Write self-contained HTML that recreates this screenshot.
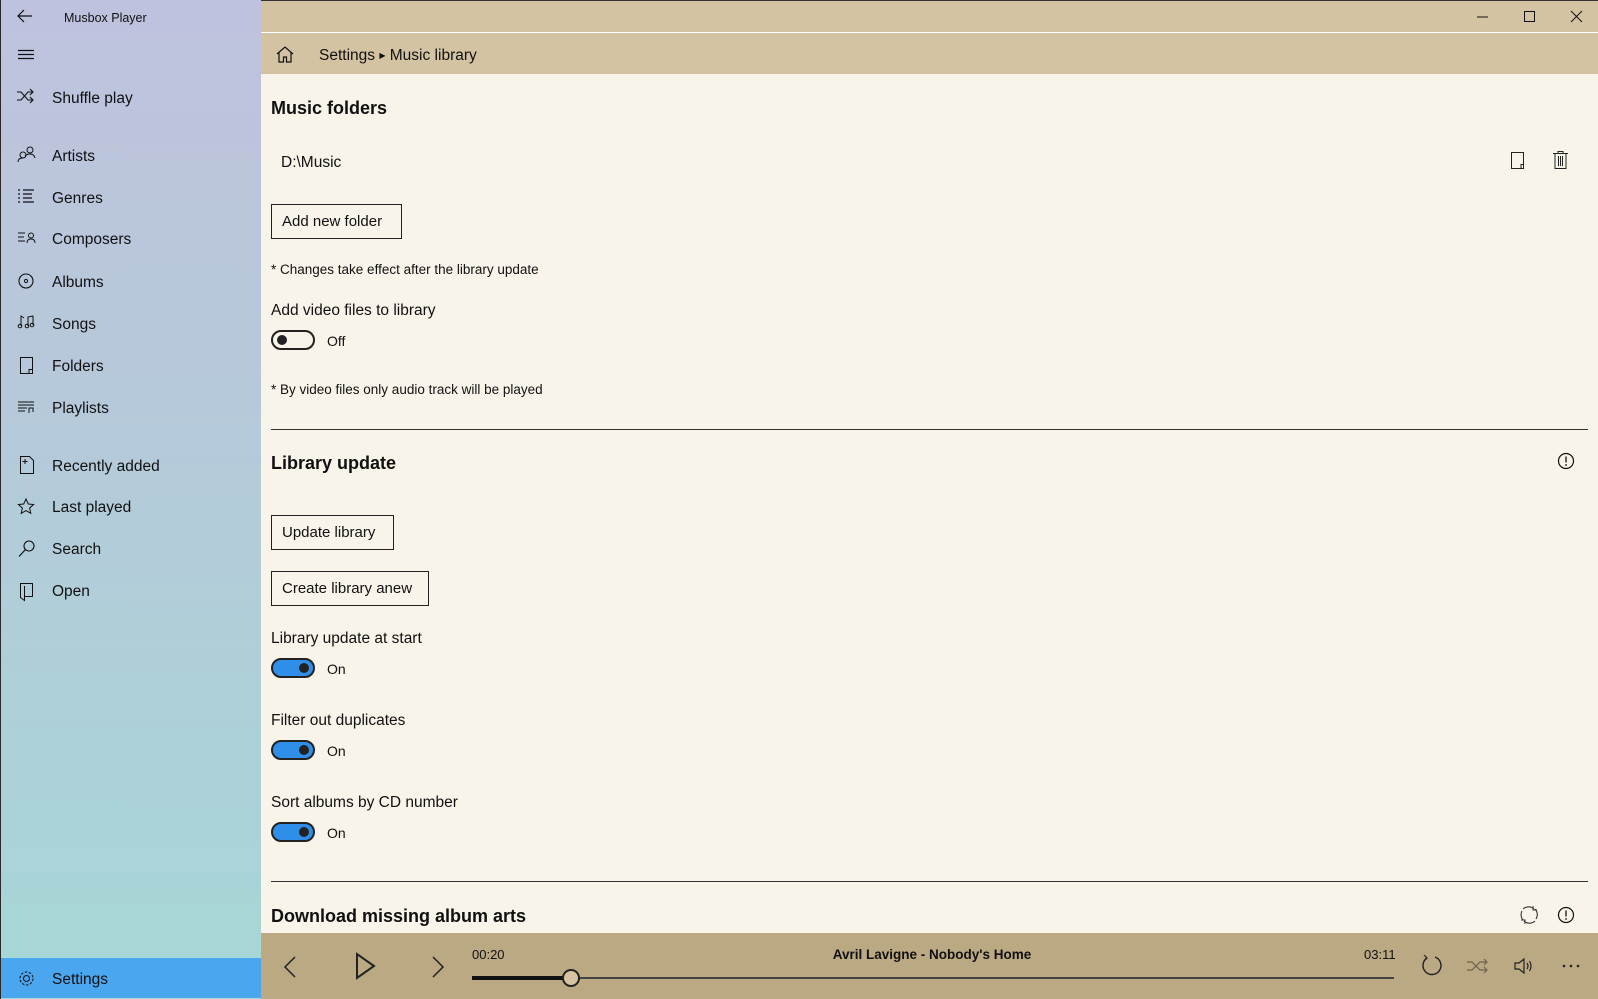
<!DOCTYPE html>
<html><head><meta charset="utf-8"><style>
*{margin:0;padding:0;box-sizing:border-box}
body{width:1598px;height:999px;overflow:hidden;position:relative;font-family:"Segoe UI","Liberation Sans",sans-serif;color:#111;background:#f8f4e9}
.a{position:absolute;white-space:nowrap}
.side{position:absolute;left:0;top:0;width:261px;height:999px;background:linear-gradient(180deg,#bfc2de 0%,#b6c9da 40%,#a6d7d6 100%);border-left:1px solid #2a2a2a}
.nav{position:absolute;left:51px;font-size:15.5px;line-height:20px}
svg{position:absolute;overflow:visible}
.t{font-size:15px;line-height:20px}
.h{font-size:18px;font-weight:bold;line-height:24px}
.btn{position:absolute;border:1px solid #222;font-size:15px;line-height:34px;padding:0 10px;height:35px}
.tg{position:absolute;left:271px;width:44px;height:20px;border-radius:10px;border:2px solid #222}
.tg i{position:absolute;top:3px;width:10px;height:10px;border-radius:50%;background:#222}
.on{background:#2f8fe8}
.on i{right:4px}
.off i{left:4px}
</style></head><body>
<div class="side">
<svg style="left:16px;top:9px" width="16" height="14" viewBox="0 0 16 14"><path d="M15 7H2M7 1L1 7l6 6" fill="none" stroke="#111" stroke-width="1.2"/></svg>
<div class="a" style="left:63px;top:9px;font-size:12.5px;line-height:18px">Musbox Player</div>
<svg style="left:17px;top:49px" width="17" height="12"><path d="M0 1.5h16M0 5.5h16M0 9.5h16" stroke="#111" stroke-width="1.2"/></svg>
<svg style="left:16px;top:89px" width="18" height="14"><path d="M0 3h4l7 8h5M0 11h4l7-8h5M13 0l3 3-3 3M13 8l3 3-3 3" fill="none" stroke="#111" stroke-width="1.1"/></svg>
<div class="nav" style="top:89px">Shuffle play</div>
<svg style="left:17px;top:146px" width="18" height="16"><circle cx="5" cy="9" r="3" fill="none" stroke="#111"/><path d="M0 16q0-4 5-4" fill="none" stroke="#111"/><circle cx="12" cy="4" r="3" fill="none" stroke="#111"/><path d="M7 10q2-2 5-2 4 0 5 4" fill="none" stroke="#111"/></svg>
<div class="nav" style="top:147px">Artists</div>
<svg style="left:17px;top:189px" width="18" height="16"><path d="M0 1h2M0 5h2M0 9h2M0 13h2M5 1h11M5 5h9M5 9h9M5 13h11" stroke="#111" stroke-width="1.2"/></svg>
<div class="nav" style="top:189px">Genres</div>
<svg style="left:17px;top:232px" width="20" height="12"><path d="M0 1h7M0 5h6M0 9h7" stroke="#111" stroke-width="1.1"/><circle cx="13" cy="3.5" r="2.5" fill="none" stroke="#111"/><path d="M9 11q0-4 4-4t4 4" fill="none" stroke="#111"/></svg>
<div class="nav" style="top:230px">Composers</div>
<svg style="left:17px;top:273px" width="16" height="16"><circle cx="8" cy="8" r="7" fill="none" stroke="#111" stroke-width="1.1"/><circle cx="8" cy="8" r="1.6" fill="none" stroke="#111"/></svg>
<div class="nav" style="top:273px">Albums</div>
<svg style="left:17px;top:315px" width="16" height="14"><path d="M3 11V1l3 2M10 11V2l5-1v9" fill="none" stroke="#111"/><circle cx="2" cy="11" r="1.8" fill="none" stroke="#111"/><circle cx="9" cy="11" r="1.8" fill="none" stroke="#111"/><circle cx="14" cy="10" r="1.8" fill="none" stroke="#111"/></svg>
<div class="nav" style="top:315px">Songs</div>
<svg style="left:19px;top:357px" width="14" height="17"><path d="M.5.5h12v16H.5z M9 16.5v-4h3.5" fill="none" stroke="#111"/></svg>
<div class="nav" style="top:357px">Folders</div>
<svg style="left:17px;top:401px" width="17" height="13"><path d="M0 1h16M0 4h16M0 7h9M0 10h7" stroke="#111"/><path d="M11 12V7h4v4" fill="none" stroke="#111"/></svg>
<div class="nav" style="top:399px">Playlists</div>
<svg style="left:19px;top:456px" width="14" height="18"><path d="M.5.5h9l4 4v13H.5z" fill="none" stroke="#111"/><path d="M5 3v5M2.5 5.5h5" stroke="#111"/></svg>
<div class="nav" style="top:457px">Recently added</div>
<svg style="left:16px;top:498px" width="18" height="17"><path d="M9 1l2.3 5 5.3.5-4 3.6 1.2 5.3L9 12.6l-4.8 2.8 1.2-5.3-4-3.6 5.3-.5z" fill="none" stroke="#111"/></svg>
<div class="nav" style="top:498px">Last played</div>
<svg style="left:17px;top:540px" width="18" height="18"><circle cx="11" cy="6" r="5" fill="none" stroke="#111" stroke-width="1.1"/><path d="M7.5 9.5L1 16.5" stroke="#111" stroke-width="1.2"/></svg>
<div class="nav" style="top:540px">Search</div>
<svg style="left:19px;top:583px" width="14" height="18"><path d="M.5.5h12v13H4.5v4l-4-3z M4.5 13.5V3" fill="none" stroke="#111"/></svg>
<div class="nav" style="top:582px">Open</div>
<div class="a" style="left:0;top:958px;width:261px;height:40px;background:#4aa6ee"></div>
<svg style="left:17px;top:970px" width="17" height="17"><circle cx="8.5" cy="8.5" r="3" fill="none" stroke="#111"/><circle cx="8.5" cy="8.5" r="6.5" fill="none" stroke="#111" stroke-dasharray="2.5 1.6"/></svg>
<div class="nav" style="top:970px">Settings</div>
</div>
<div class="a" style="left:261px;top:0;width:1337px;height:32px;background:#d3c3a2;border-top:1px solid #333"></div>
<div class="a" style="left:261px;top:32px;width:1337px;height:1px;background:#fff"></div>
<div class="a" style="left:261px;top:33px;width:1337px;height:41px;background:#d3c3a2"></div>
<svg style="left:1477px;top:16px" width="12" height="2"><path d="M0 1h11" stroke="#111"/></svg>
<svg style="left:1524px;top:11px" width="12" height="12"><rect x=".5" y=".5" width="10" height="10" fill="none" stroke="#111"/></svg>
<svg style="left:1571px;top:11px" width="12" height="12"><path d="M0 0l11 11M11 0L0 11" stroke="#111"/></svg>
<svg style="left:276px;top:46px" width="18" height="17"><path d="M1 8L9 1l8 7M3 6.5V16h4.5v-5h3v5H15V6.5" fill="none" stroke="#111" stroke-width="1.2"/></svg>
<div class="a" style="left:319px;top:45px;font-size:15.5px;line-height:22px">Settings <span style="font-size:8px;vertical-align:2px">▶</span> Music library</div>

<div class="a h" style="left:271px;top:96px">Music folders</div>
<div class="a" style="left:281px;top:153px;font-size:15.5px;line-height:20px">D:\Music</div>
<svg style="left:1511px;top:152px" width="15" height="18"><path d="M.5.5h12v16H.5z M10 16.5v-4h3" fill="none" stroke="#222"/></svg>
<svg style="left:1553px;top:151px" width="15" height="18"><path d="M0 2.5h15M5 2.5V.5h5v2M2 2.5v15h11v-15M5.5 5v10M7.5 5v10M9.5 5v10" fill="none" stroke="#222"/></svg>
<div class="btn" style="left:271px;top:204px;width:131px">Add new folder</div>
<div class="a" style="left:271px;top:261px;font-size:13.5px;line-height:18px">* Changes take effect after the library update</div>
<div class="a t" style="left:271px;top:301px;font-size:15.5px">Add video files to library</div>
<div class="tg off" style="top:330px"><i></i></div>
<div class="a" style="left:327px;top:332px;font-size:14px;line-height:18px">Off</div>
<div class="a" style="left:271px;top:381px;font-size:13.5px;line-height:18px">* By video files only audio track will be played</div>
<div class="a" style="left:271px;top:429px;width:1317px;height:1px;background:#333"></div>
<div class="a h" style="left:271px;top:451px">Library update</div>
<svg style="left:1557px;top:452px" width="18" height="18"><circle cx="9" cy="9" r="7.5" fill="none" stroke="#111" stroke-width="1.2"/><path d="M9 4.5v6" stroke="#111" stroke-width="1.3"/><circle cx="9" cy="13" r=".9" fill="#111"/></svg>
<div class="btn" style="left:271px;top:515px;width:123px">Update library</div>
<div class="btn" style="left:271px;top:571px;width:158px">Create library anew</div>
<div class="a t" style="left:271px;top:629px;font-size:15.5px">Library update at start</div>
<div class="tg on" style="top:658px"><i></i></div>
<div class="a" style="left:327px;top:660px;font-size:14px;line-height:18px">On</div>
<div class="a t" style="left:271px;top:711px;font-size:15.5px">Filter out duplicates</div>
<div class="tg on" style="top:740px"><i></i></div>
<div class="a" style="left:327px;top:742px;font-size:14px;line-height:18px">On</div>
<div class="a t" style="left:271px;top:793px;font-size:15.5px">Sort albums by CD number</div>
<div class="tg on" style="top:822px"><i></i></div>
<div class="a" style="left:327px;top:824px;font-size:14px;line-height:18px">On</div>
<div class="a" style="left:271px;top:881px;width:1317px;height:1px;background:#333"></div>
<div class="a h" style="left:271px;top:904px">Download missing album arts</div>
<svg style="left:1519px;top:905px" width="20" height="20"><path d="M4 4a8 8 0 0 1 11 0M16 16a8 8 0 0 1-11 0M3 6A8 8 0 0 0 4 15M17 14a8 8 0 0 0-1-10" fill="none" stroke="#333" stroke-width="1.1"/><path d="M14 1v4h4M6 19v-4H2" fill="none" stroke="#333"/></svg>
<svg style="left:1557px;top:906px" width="18" height="18"><circle cx="9" cy="9" r="7.5" fill="none" stroke="#111" stroke-width="1.2"/><path d="M9 4.5v6" stroke="#111" stroke-width="1.3"/><circle cx="9" cy="13" r=".9" fill="#111"/></svg>

<div class="a" style="left:261px;top:933px;width:1337px;height:66px;background:#bba984"></div>
<svg style="left:284px;top:956px" width="12" height="22"><path d="M11 1L1 11l10 10" fill="none" stroke="#222" stroke-width="1.5"/></svg>
<svg style="left:356px;top:953px" width="20" height="26"><path d="M1 1v24l17-12z" fill="none" stroke="#222" stroke-width="2"/></svg>
<svg style="left:432px;top:956px" width="12" height="22"><path d="M1 1l10 10-10 10" fill="none" stroke="#222" stroke-width="1.5"/></svg>
<div class="a" style="left:472px;top:947px;font-size:13px;line-height:16px">00:20</div>
<div class="a" style="left:832px;top:946px;width:200px;text-align:center;font-size:13.5px;font-weight:bold;line-height:18px">Avril Lavigne - Nobody's Home</div>
<div class="a" style="left:1364px;top:947px;font-size:13px;line-height:16px">03:11</div>
<div class="a" style="left:472px;top:977px;width:922px;height:2px;background:#444"></div>
<div class="a" style="left:472px;top:976px;width:100px;height:4px;background:#111"></div>
<div class="a" style="left:562px;top:969px;width:18px;height:18px;border-radius:50%;border:2px solid #222;background:#d5c3a2"></div>
<svg style="left:1421px;top:955px" width="22" height="22"><path d="M6 3a9 9 0 1 0 8-1" fill="none" stroke="#222" stroke-width="1.4"/><path d="M3 0l3 3-3 3" fill="none" stroke="#222" stroke-width="1.2"/></svg>
<svg style="left:1467px;top:958px" width="22" height="16"><path d="M0 4h5l8 8h7M0 12h5l8-8h7M17 1l3 3-3 3M17 9l3 3-3 3" fill="none" stroke="#6d6250" stroke-width="1.2"/></svg>
<svg style="left:1514px;top:957px" width="20" height="18"><path d="M1 6h4l5-4v14l-5-4H1z" fill="none" stroke="#222" stroke-width="1.2"/><path d="M13 6q2 3 0 6M15.5 4q3 5 0 10" fill="none" stroke="#222" stroke-width="1.2"/></svg>
<svg style="left:1562px;top:964px" width="20" height="4"><circle cx="2" cy="2" r="1.3" fill="#222"/><circle cx="9" cy="2" r="1.3" fill="#222"/><circle cx="16" cy="2" r="1.3" fill="#222"/></svg>
</body></html>
